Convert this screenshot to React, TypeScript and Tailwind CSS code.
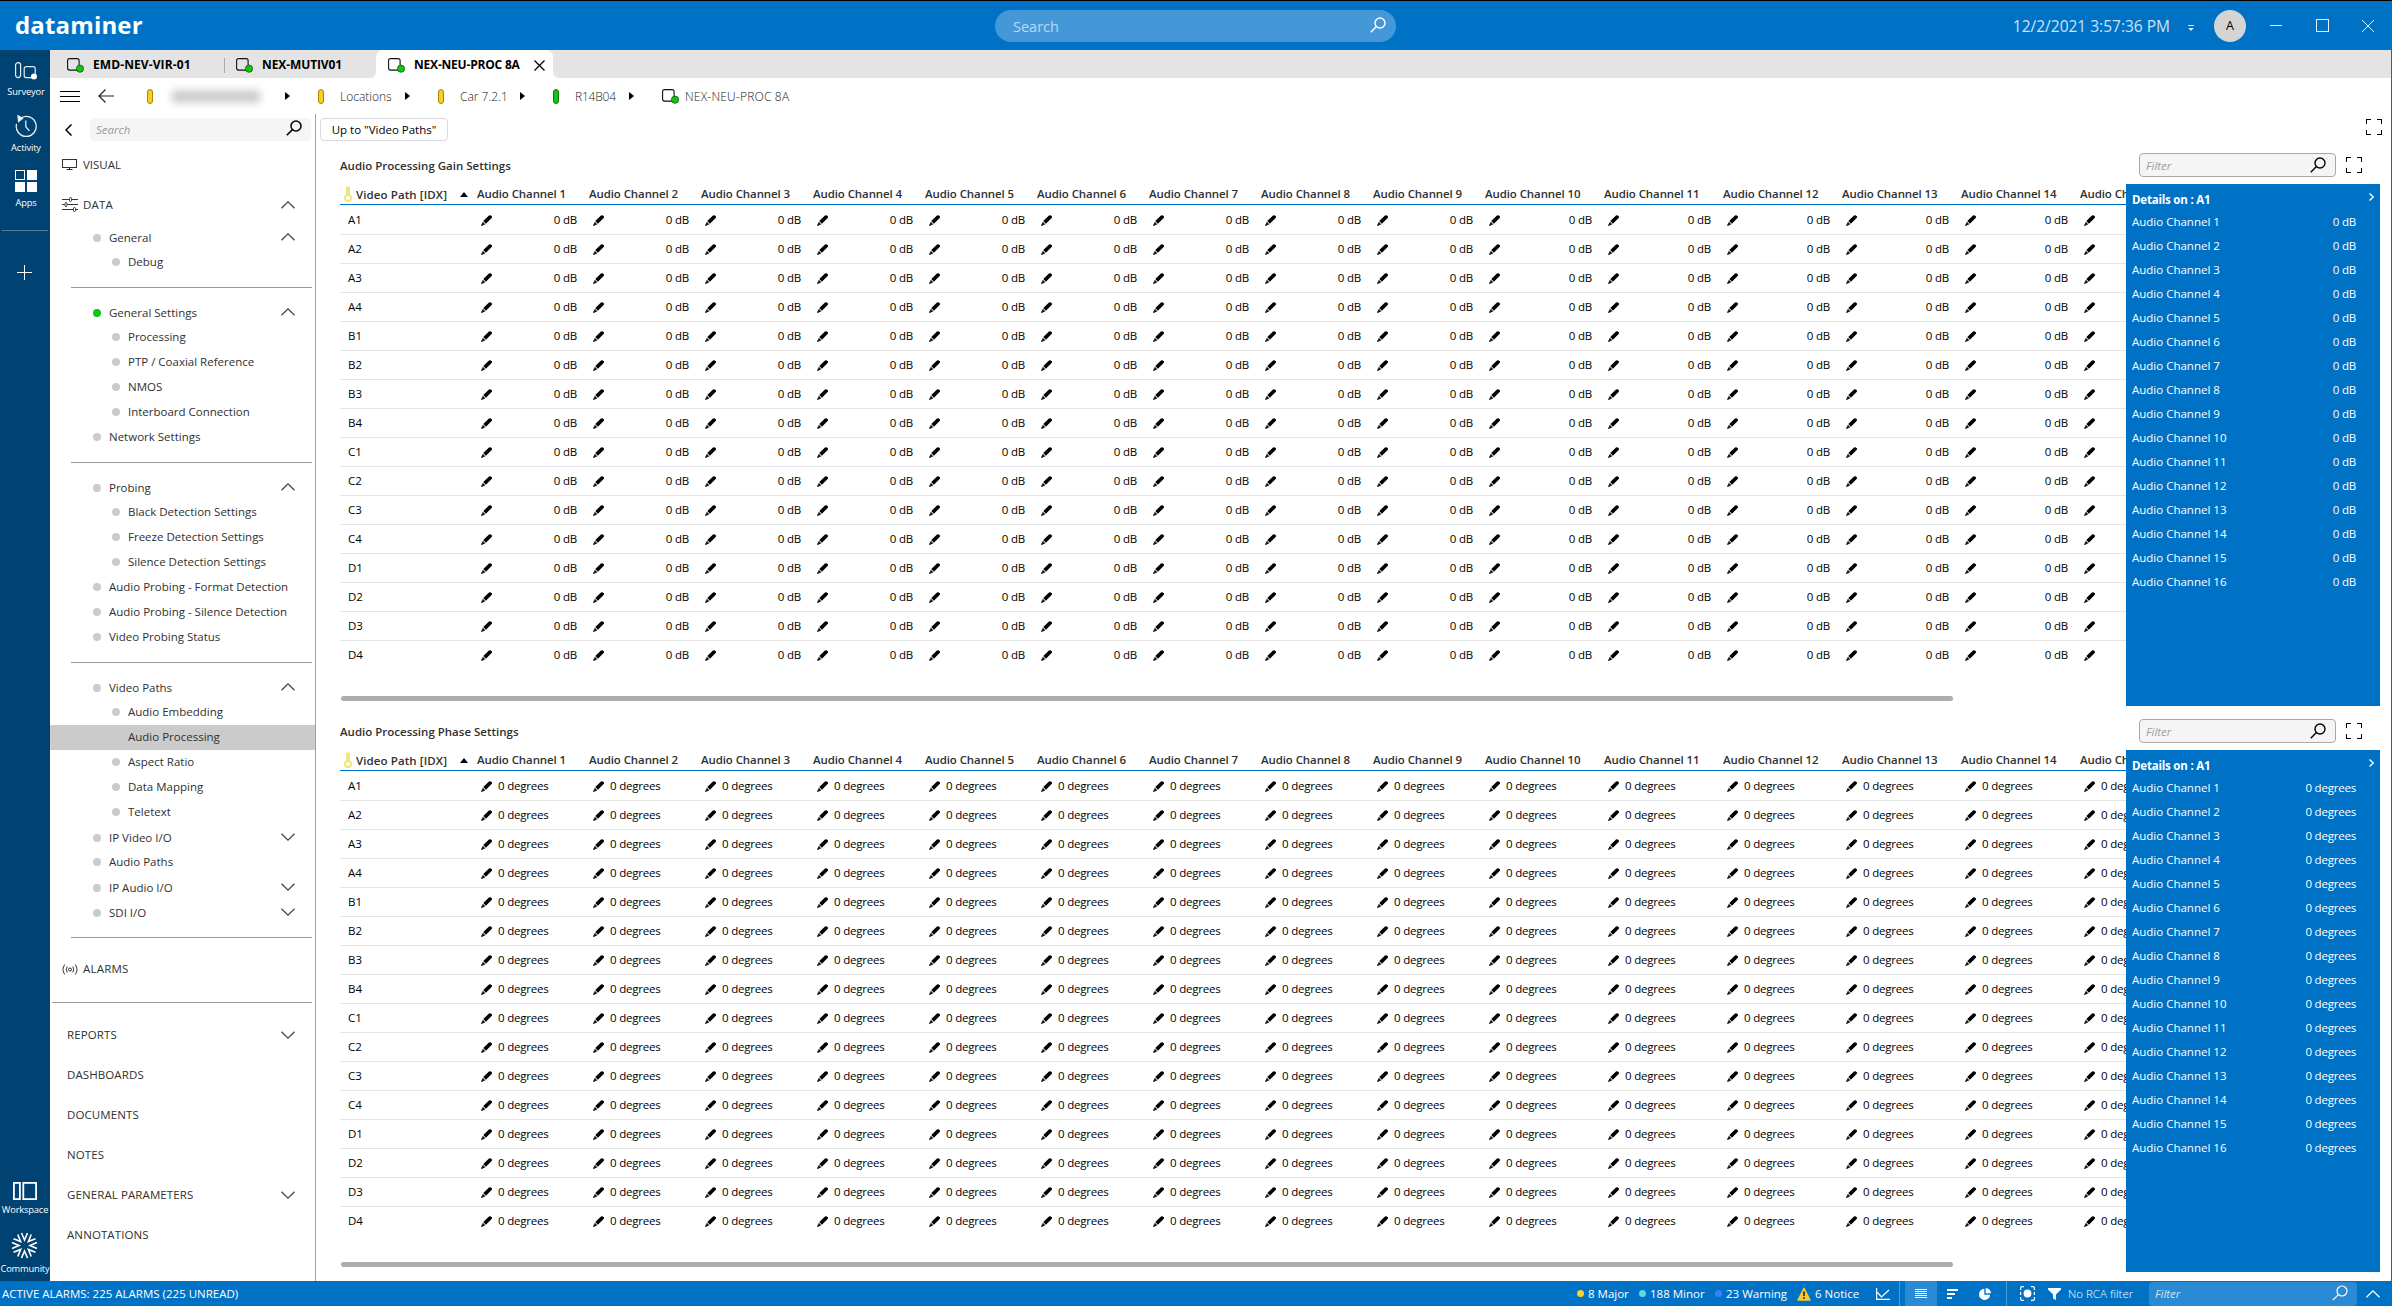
import React from 'react';

type NavItem = {
  label: string;
  level: 1 | 2;
  chevron?: 'up' | 'down';
  green?: boolean;
  selected?: boolean;
};

const navSections: NavItem[][] = [
  [
    { label: 'General', level: 1, chevron: 'up' },
    { label: 'Debug', level: 2 },
  ],
  [
    { label: 'General Settings', level: 1, chevron: 'up', green: true },
    { label: 'Processing', level: 2 },
    { label: 'PTP / Coaxial Reference', level: 2 },
    { label: 'NMOS', level: 2 },
    { label: 'Interboard Connection', level: 2 },
    { label: 'Network Settings', level: 1 },
  ],
  [
    { label: 'Probing', level: 1, chevron: 'up' },
    { label: 'Black Detection Settings', level: 2 },
    { label: 'Freeze Detection Settings', level: 2 },
    { label: 'Silence Detection Settings', level: 2 },
    { label: 'Audio Probing - Format Detection', level: 1 },
    { label: 'Audio Probing - Silence Detection', level: 1 },
    { label: 'Video Probing Status', level: 1 },
  ],
  [
    { label: 'Video Paths', level: 1, chevron: 'up' },
    { label: 'Audio Embedding', level: 2 },
    { label: 'Audio Processing', level: 2, selected: true },
    { label: 'Aspect Ratio', level: 2 },
    { label: 'Data Mapping', level: 2 },
    { label: 'Teletext', level: 2 },
    { label: 'IP Video I/O', level: 1, chevron: 'down' },
    { label: 'Audio Paths', level: 1 },
    { label: 'IP Audio I/O', level: 1, chevron: 'down' },
    { label: 'SDI I/O', level: 1, chevron: 'down' },
  ],
];

const pages: { label: string; chevron?: boolean }[] = [
  { label: 'REPORTS', chevron: true },
  { label: 'DASHBOARDS' },
  { label: 'DOCUMENTS' },
  { label: 'NOTES' },
  { label: 'GENERAL PARAMETERS', chevron: true },
  { label: 'ANNOTATIONS' },
];

const videoPaths = ['A', 'B', 'C', 'D'].flatMap((group) =>
  [1, 2, 3, 4].map((n) => `${group}${n}`)
);

const channels = Array.from({ length: 16 }, (_, i) => i + 1);
// the last channel is scrolled out of the table
const visibleChannels = channels.slice(0, 15);

const Magnifier: React.FC<{ className?: string; width?: number }> = ({
  className = '',
  width = 1.4,
}) => (
  <svg className={className} viewBox="0 0 16 16" fill="none" stroke="currentColor" strokeWidth={width}>
    <circle cx="10" cy="6" r="5" />
    <path d="M6.4 9.6L.8 15.2" />
  </svg>
);

const Chevron: React.FC<{ dir: 'up' | 'down'; className?: string }> = ({ dir, className = '' }) => (
  <svg
    className={`h-[8px] w-[14px] shrink-0 ${className}`}
    viewBox="0 0 14 8"
    fill="none"
    stroke="currentColor"
    strokeWidth="1.3"
  >
    <path d={dir === 'up' ? 'M.5 7.2L7 .9l6.500 6.300' : 'M.5 .8L7 7.100l6.500-6.300'} />
  </svg>
);

const Expand: React.FC = () => (
  <svg className="h-4 w-4 shrink-0" viewBox="0 0 16 16" fill="none" stroke="#000" shapeRendering="crispEdges">
    <path d="M.5 5V.5H5M11 .5h4.500V5M15.500 11v4.500H11M5 15.500H.5V11" />
  </svg>
);

const ElementIcon: React.FC = () => (
  <svg className="h-[15px] w-[17px] shrink-0" viewBox="0 0 17 15" fill="none">
    <rect x=".6" y=".6" width="11.500" height="11.500" rx="2" stroke="#111" strokeWidth="1.1" />
    <circle cx="13" cy="10.700" r="3.600" fill="#14c414" stroke="#0a5a0a" strokeWidth=".8" />
  </svg>
);

const Pencil: React.FC = () => (
  <svg className="h-[11px] w-[11px] shrink-0" viewBox="0 0 11 11">
    <path d="M2.300 6L8 .6Q9.300 -.1 10.500 .9T10.400 3.200L4.900 8.700z" fill="#000" />
    <path d="M1.900 6.700L4.300 9.200 .8 10.900Q-.2 10.800.2 9.900z" fill="#1a1a1a" />
  </svg>
);

const KeyIcon: React.FC = () => (
  <svg className="h-4 w-[8px] shrink-0" viewBox="0 0 8 16" fill="none">
    <path d="M2 1Q4 -.6 6 1V9.500H2z" fill="#efe67e" />
    <circle cx="4" cy="12" r="3" stroke="#efe67e" strokeWidth="2" />
  </svg>
);

const Caret: React.FC = () => (
  <svg className="h-[8px] w-[5px] shrink-0" viewBox="0 0 5 8">
    <path d="M0 0L5 4 0 8z" fill="#000" />
  </svg>
);

const TitleBar: React.FC = () => (
  <header className="flex h-[50px] shrink-0 items-center border-t border-black bg-[#0072c6] text-white">
    <div className="w-[995px] pb-[2px] pl-[15px] text-[24px] leading-none font-bold tracking-[0.15px]">
      dataminer
    </div>
    <div className="flex h-8 w-[401px] items-center justify-between rounded-full bg-[#4598d8] pr-[10px] pl-[18px]">
      <span className="pt-[2px] text-[14.500px] text-[#b9d9f1]">Search</span>
      <Magnifier className="mb-px h-4 w-4" />
    </div>
    <div className="ml-auto flex h-8 items-center pr-[18px]">
      <span className="mt-[3px] text-[15.500px] whitespace-nowrap text-[#cde2f4]">12/2/2021 3:57:36 PM</span>
      <svg className="mt-[4px] ml-[18px] h-[6px] w-[6px]" viewBox="0 0 6 6">
        <path d="M0 .5h6" stroke="#dcebf8" />
        <path d="M.2 3h5.600L3 6z" fill="#dcebf8" />
      </svg>
      <div className="ml-[20px] flex h-8 w-8 items-center justify-center rounded-full bg-[#d4d4d4] pt-px text-[12.500px] text-black">
        A
      </div>
      <div className="ml-6 h-px w-3 bg-[#e5f1fa]" />
      <div className="ml-[34px] h-[13px] w-[13px] border border-[#e5f1fa]" />
      <svg className="ml-[33px] h-[12px] w-[12px]" viewBox="0 0 12 12" stroke="#e5f1fa">
        <path d="M0 0l12 12M12 0L0 12" />
      </svg>
    </div>
  </header>
);

const RailLabel: React.FC<{ children: React.ReactNode }> = ({ children }) => (
  <span className="text-[9.300px] leading-[12px] tracking-[-0.15px] whitespace-nowrap">{children}</span>
);

const Rail: React.FC = () => (
  <aside className="flex w-[50px] shrink-0 flex-col items-center bg-[#004272] text-white">
    <div className="flex h-[55px] w-full flex-col items-center pt-3 pl-[2px]">
      <svg className="mb-[6px] h-[18px] w-[22px]" viewBox="0 0 22 18" fill="none" stroke="#e8eef4" strokeWidth="1.2">
        <rect x=".6" y=".6" width="5" height="15" rx="2.500" />
        <rect x="9.200" y="4.600" width="11" height="11" rx="2" />
        <circle cx="19" cy="14.500" r="3" fill="#fff" stroke="none" />
      </svg>
      <RailLabel>Surveyor</RailLabel>
    </div>
    <div className="flex h-[55px] w-full flex-col items-center pt-[10px] pl-[2px]">
      <svg className="mb-[5px] h-[22px] w-[22px]" viewBox="0 0 22 22" fill="none" stroke="#e8eef4" strokeWidth="1.300">
        <path d="M6.200 2.800A10 10 0 1 1 1.600 8.800" />
        <path d="M10.800 5.500v6.200l3.600 4.200" />
        <path d="M3 .8l4.600 2.600L3.600 6.600z" fill="#fff" />
      </svg>
      <RailLabel>Activity</RailLabel>
    </div>
    <div className="flex h-[75px] w-full flex-col items-center pt-[10px] pl-[2px]">
      <div className="mb-[5px] grid grid-cols-2 gap-[2px]">
        <div className="h-[10px] w-[10px] border border-white" />
        <div className="h-[10px] w-[10px] bg-white" />
        <div className="h-[10px] w-[10px] bg-white" />
        <div className="h-[10px] w-[10px] bg-white" />
      </div>
      <RailLabel>Apps</RailLabel>
    </div>
    <div className="mt-[-5px] h-px w-[46px] bg-[#5b7f9f]" />
    <svg className="mt-[34px] mr-px h-[15px] w-[15px]" viewBox="0 0 15 15" stroke="#fff">
      <path d="M7.500 0v15M0 7.500h15" />
    </svg>
    <div className="mt-auto flex flex-col items-center">
      <svg className="mb-[4px] h-[18px] w-[24px]" viewBox="0 0 24 18" fill="none" stroke="#fff" strokeWidth="1.800">
        <rect x=".9" y=".9" width="6" height="16.200" />
        <rect x="10.300" y=".9" width="12.800" height="16.200" />
      </svg>
      <RailLabel>Workspace</RailLabel>
      <svg className="mt-[16px] mb-[4px] h-[27px] w-[27px]" viewBox="-13.500 -13.500 27 27" fill="none" stroke="#fff" strokeWidth="1.600">
        {[0, 45, 90, 135, 180, 225, 270, 315].map((deg) => (
          <path key={deg} d="M-3 -12.500L0 -5.500 3 -12.500" transform={`rotate(${deg})`} />
        ))}
      </svg>
      <RailLabel>Community</RailLabel>
    </div>
    <div className="h-[6px] shrink-0" />
  </aside>
);

const TabBar: React.FC = () => (
  <div className="flex h-7 shrink-0 text-[12px] font-bold text-black">
    <div className="flex w-[326px] items-center rounded-br-[6px] bg-[#e4e4e4] pt-[2px] pl-[17px]">
      <ElementIcon />
      <span className="ml-[9px] w-[131px] tracking-[0.100px]">EMD-NEV-VIR-01</span>
      <span className="h-[15px] w-px bg-[#aaa]" />
      <span className="ml-[11px] flex">
        <ElementIcon />
      </span>
      <span className="ml-[9px] tracking-[-0.100px]">NEX-MUTIV01</span>
    </div>
    <div className="w-[177px] bg-linear-to-b from-[#e4e4e4] from-50% to-white to-50%">
      <div className="flex h-full items-center rounded-t-[7px] bg-white pt-[2px] pl-3">
        <ElementIcon />
        <span className="ml-[9px] w-[120px] tracking-[-0.200px]">NEX-NEU-PROC 8A</span>
        <svg className="h-[11px] w-[11px]" viewBox="0 0 11 11" stroke="#000" strokeWidth="1.300">
          <path d="M.5 .5l10 10M10.500 .5l-10 10" />
        </svg>
      </div>
    </div>
    <div className="flex-1 rounded-bl-[6px] bg-[#e4e4e4]" />
  </div>
);

const Breadcrumb: React.FC = () => (
  <div className="flex h-9 shrink-0 items-center pl-[10px] text-[12px] whitespace-nowrap text-[#222]">
    <div className="flex w-5 flex-col gap-1">
      <span className="h-px bg-black" />
      <span className="h-px bg-black" />
      <span className="h-px bg-black" />
    </div>
    <svg className="ml-[18px] h-[14px] w-4" viewBox="0 0 16 14" fill="none" stroke="#222" strokeWidth="1.200">
      <path d="M7.500 .5L1 7l6.500 6.500M1 7h15" />
    </svg>
    <span className="ml-[33px] h-[15px] w-[6px] rounded-[3px] border border-[#a8860c] bg-[#f5d020]" />
    <div className="ml-[14px] flex h-[15px] w-[98px] items-center justify-center pt-px blur-[4px]">
      <span className="h-[11px] w-[88px] bg-[#c4c4c4]" />
    </div>
    <span className="ml-5 flex w-[33px]">
      <Caret />
    </span>
    <span className="h-[15px] w-[6px] rounded-[3px] border border-[#a8860c] bg-[#f5d020]" />
    <span className="ml-4 w-[65px] pt-[2px] font-light">Locations</span>
    <span className="flex w-[33px]">
      <Caret />
    </span>
    <span className="h-[15px] w-[6px] rounded-[3px] border border-[#a8860c] bg-[#f5d020]" />
    <span className="ml-4 w-[60px] pt-[2px] font-light">Car 7.2.1</span>
    <span className="flex w-[33px]">
      <Caret />
    </span>
    <span className="h-[15px] w-[6px] rounded-[3px] border border-[#0b7a0b] bg-[#14c414]" />
    <span className="ml-4 w-[54px] pt-[2px] tracking-[-0.200px] font-light">R14B04</span>
    <span className="flex w-[33px]">
      <Caret />
    </span>
    <ElementIcon />
    <span className="ml-[6px] pt-[2px] font-light tracking-[0.200px]">NEX-NEU-PROC 8A</span>
  </div>
);

const NavRow: React.FC<{ item: NavItem }> = ({ item }) => (
  <div
    className={`flex h-[25px] items-center pr-5 ${item.level === 1 ? 'pl-[43px]' : 'pl-[62px]'} ${
      item.selected ? 'bg-[#cbcbcb]' : ''
    } ${item.chevron ? 'pt-px' : 'pb-px'}`}
  >
    <span className={`h-2 w-2 rounded-full ${item.green ? 'bg-[#14c414]' : 'bg-[#cbcbcb]'}`} />
    <span className="ml-2 flex-1">{item.label}</span>
    {item.chevron && <Chevron dir={item.chevron} className="mb-[2px] text-[#444]" />}
  </div>
);

const Separator: React.FC<{ wide?: boolean }> = ({ wide }) => (
  <div className={`h-[25px] pt-3 pr-[3px] ${wide ? 'pl-[2px]' : 'pl-[21px]'}`}>
    <div className="h-px bg-[#999]" />
  </div>
);

const NavPanel: React.FC = () => (
  <nav className="w-[266px] shrink-0 border-r border-[#a0a0a0] text-[11.500px] whitespace-nowrap text-[#303030]">
    <div className="flex h-[31px] items-center pr-1 pl-[15px]">
      <svg className="h-3 w-[7px]" viewBox="0 0 7 12" fill="none" stroke="#000" strokeWidth="1.500">
        <path d="M6.500 .5L1 6l5.500 5.500" />
      </svg>
      <div className="ml-[18px] flex h-[23px] flex-1 items-center justify-between rounded-[4px] bg-[#f5f5f5] pr-[9px] pl-[6px]">
        <span className="text-[#999] italic">Search</span>
        <Magnifier className="mb-[3px] h-4 w-4 text-black" width={1.5} />
      </div>
    </div>
    <div className="flex h-10 items-center pb-px pl-3">
      <svg className="h-[11px] w-[15px]" viewBox="0 0 15 11" fill="none" stroke="#333">
        <rect x=".5" y=".5" width="14" height="8" />
        <path d="M7.500 8.500v2M4.500 10.500h6" />
      </svg>
      <span className="ml-[6px]">VISUAL</span>
    </div>
    <div className="flex h-10 items-center pr-5 pl-3">
      <svg className="mb-[2px] h-[15px] w-4" viewBox="0 0 16 15" fill="none" stroke="#333">
        <path d="M0 2.500h7M10 2.500h6M0 7.500h2.500M5.500 7.500H16M0 12.500h11M14 12.500h2" />
        <rect x="7.500" y=".5" width="2" height="4" rx="1" />
        <rect x="3" y="5.500" width="2" height="4" rx="1" />
        <rect x="11.500" y="10.500" width="2" height="4" rx="1" />
      </svg>
      <span className="ml-[5px] flex-1 tracking-[0.200px]">DATA</span>
      <Chevron dir="up" className="text-[#444]" />
    </div>
    {navSections.map((section) => (
      <React.Fragment key={section[0].label}>
        {section.map((item) => (
          <NavRow key={item.label} item={item} />
        ))}
        <Separator />
      </React.Fragment>
    ))}
    <div className="flex h-10 items-center pb-[2px] pl-3">
      <svg className="h-[11px] w-4" viewBox="0 0 16 11" fill="none" stroke="#333">
        <circle cx="8" cy="5.500" r="1.500" />
        <path d="M5.200 2.500Q3.400 5.500 5.200 8.500M10.800 2.500Q12.600 5.500 10.800 8.500M2.800 .5Q-.9 5.500 2.800 10.500M13.200 .5Q16.900 5.500 13.200 10.500" />
      </svg>
      <span className="ml-[5px] tracking-[0.200px]">ALARMS</span>
    </div>
    <Separator wide />
    {pages.map((page) => (
      <div key={page.label} className="flex h-10 items-center justify-between pr-5 pb-px pl-[17px]">
        <span className="tracking-[0.100px]">{page.label}</span>
        {page.chevron && <Chevron dir="down" className="text-[#444]" />}
      </div>
    ))}
  </nav>
);

type TableProps = { title: string; value: string; align: 'left' | 'right' };

const ParameterTable: React.FC<TableProps> = ({ title, value, align }) => (
  <section className="flex h-[566px] flex-col text-[11.500px] whitespace-nowrap text-black">
    <div className="flex h-[39px] items-center pt-px pr-[29px]">
      <h2 className="flex-1 pt-px font-semibold text-[#303030]">{title}</h2>
      <div className="mr-[10px] flex h-6 w-[197px] items-center justify-between rounded-[4px] border border-[#a8a8a8] bg-[#f5f5f5] pr-[9px] pl-[6px]">
        <span className="pt-px text-[#a0a0a0] italic">Filter</span>
        <Magnifier className="mb-px h-4 w-4" />
      </div>
      <Expand />
    </div>
    <div className="flex flex-1">
      <div className="flex w-[1786px] flex-col overflow-hidden">
        <div className="flex h-[21px] w-max items-center border-b border-[#0072c6] font-semibold text-[#303030]">
          <div className="flex w-[137px] items-center pl-1">
            <KeyIcon />
            <span className="ml-1 flex-1 pt-px tracking-[0.100px]">Video Path [IDX]</span>
            <svg className="mr-[9px] h-[5px] w-[8px]" viewBox="0 0 8 5">
              <path d="M4 0l4 5H0z" fill="#000" />
            </svg>
          </div>
          {visibleChannels.map((n) => (
            <div key={n} className={`tracking-[-0.100px] ${n < 10 ? 'w-[112px]' : 'w-[119px]'}`}>
              Audio Channel {n}
            </div>
          ))}
        </div>
        <div className="mt-px w-max">
          {videoPaths.map((path) => (
            <div key={path} className="flex h-[29px] items-center border-b border-[#e4e4e4] last:border-transparent">
              <div className="w-[137px] pl-2">{path}</div>
              {visibleChannels.map((n) => (
                <div
                  key={n}
                  className={`flex items-center pr-[12px] pl-1 tracking-[-0.200px] ${
                    n < 10 ? 'w-[112px]' : 'w-[119px]'
                  } ${align === 'right' ? 'justify-between' : 'gap-[6px]'}`}
                >
                  <Pencil />
                  <span>{value}</span>
                </div>
              ))}
            </div>
          ))}
        </div>
        <div className="mt-[26px] ml-px h-[5px] w-[1612px] rounded-full bg-[#adadad]" />
      </div>
      <div className="h-[522px] w-[254px] bg-[#0072c6] pr-[24px] pl-[6px] text-white">
        <div className="flex h-[26px] items-center justify-between pt-[6px] font-bold">
          <span className="tracking-[-0.2px]">Details on : A1</span>
          <svg className="mr-[-18px] mb-[6px] h-[8px] w-[5px]" viewBox="0 0 5 8" fill="none" stroke="#fff" strokeWidth="1.300">
            <path d="M.5 .5L4.200 4 .5 7.500" />
          </svg>
        </div>
        {channels.map((n) => (
          <div key={n} className="flex h-6 items-center justify-between pb-px">
            <span>Audio Channel {n}</span>
            <span className="tracking-[-0.200px]">{value}</span>
          </div>
        ))}
      </div>
    </div>
  </section>
);

const StatusBar: React.FC = () => (
  <footer className="flex h-[25px] shrink-0 items-center bg-[#0072c6] text-[11.500px] whitespace-nowrap text-white">
    <span className="w-[1577px] pl-[2px]">ACTIVE ALARMS: 225 ALARMS (225 UNREAD)</span>
    <span className="h-[7px] w-[7px] rounded-full bg-[#f8d22a]" />
    <span className="ml-1 w-[51px]">8 Major</span>
    <span className="h-[7px] w-[7px] rounded-full bg-[#5fd9dc]" />
    <span className="ml-1 w-[65px]">188 Minor</span>
    <span className="h-[7px] w-[7px] rounded-full bg-[#3f7cf8]" />
    <span className="ml-1 w-[71px]">23 Warning</span>
    <svg className="h-[14px] w-[14px]" viewBox="0 0 14 14">
      <path d="M7 .8L13.300 13.200H.7z" fill="#fbc92d" stroke="#fbc92d" strokeLinejoin="round" />
      <path d="M7 4.500v4.500M7 10.300v1.700" stroke="#222" strokeWidth="1.600" />
    </svg>
    <span className="ml-1 w-[61px]">6 Notice</span>
    <svg className="h-3 w-[14px]" viewBox="0 0 14 12" fill="none" stroke="#fff" strokeWidth="1.200">
      <path d="M.6 0v11.400H14M1.500 4.500L5.500 9 13 2" />
    </svg>
    <span className="ml-[9px] h-full w-px bg-[#4c9cd8]" />
    <span className="ml-[5px] flex h-full w-8 flex-col items-center justify-center gap-px bg-[#2b8ad4]">
      <span className="h-px w-3 bg-white" />
      <span className="h-px w-3 bg-white" />
      <span className="h-px w-3 bg-white" />
      <span className="h-px w-3 bg-white" />
      <span className="h-px w-3 bg-white" />
    </span>
    <span className="ml-[10px] flex w-3 flex-col gap-[2px]">
      <span className="h-[2px] w-[11px] bg-white" />
      <span className="h-[2px] w-[8px] bg-white" />
      <span className="h-[2px] w-[5px] bg-white" />
    </span>
    <svg className="ml-5 h-3 w-3" viewBox="0 0 12 12" fill="#fff">
      <path d="M5.300 .8V6.700H11.200A5.600 5.600 0 1 1 5.300 .8z" />
      <path d="M6.700 0A5.300 5.300 0 0 1 12 5.300H6.700z" />
    </svg>
    <span className="ml-[15px] h-full w-px bg-[#4c9cd8]" />
    <svg className="ml-[13px] h-[15px] w-[15px]" viewBox="0 0 15 15" fill="none" stroke="#fff" strokeWidth="1.200">
      <path d="M4 .6H2Q.6 .6 .6 2v2M11 .6h2q1.400 0 1.400 1.400v2M4 14.400H2Q.6 14.400 .6 13v-2M11 14.400h2q1.400 0 1.400-1.400v-2M.6 6v3M14.400 6v3" />
      <circle cx="7.500" cy="7.500" r="3.300" fill="#fff" />
    </svg>
    <svg className="ml-[13px] h-3 w-[13px]" viewBox="0 0 13 12">
      <path d="M0 0h13v1.500L8 6.500V12L5 10.500v-4L0 1.500z" fill="#fff" />
    </svg>
    <span className="ml-[7px] w-[81px] font-light">No RCA filter</span>
    <div className="flex h-6 w-[208px] items-center justify-between rounded-[4px] bg-[#2b8ad4] pr-[9px] pl-[6px]">
      <span className="text-[#cfe5f6] italic">Filter</span>
      <Magnifier className="mb-px h-4 w-4" width={1.2} />
    </div>
    <Chevron dir="up" className="ml-[9px]" />
  </footer>
);

const App: React.FC = () => {
  return (
    <div className="flex h-[1306px] w-[2392px] flex-col overflow-hidden bg-white font-['Open_Sans','Noto_Sans',sans-serif]">
      <TitleBar />
      <div className="flex min-h-0 flex-1">
        <Rail />
        <div className="flex min-w-0 flex-1 flex-col border-r border-[#0072c6]">
          <TabBar />
          <Breadcrumb />
          <div className="flex min-h-0 flex-1">
            <NavPanel />
            <main className="min-w-0 flex-1 pl-1">
              <div className="flex h-[31px] items-center justify-between pr-[9px]">
                <button className="h-[23px] w-32 rounded-[4px] border border-[#dadada] text-[11.500px] whitespace-nowrap">
                  Up to "Video Paths"
                </button>
                <div className="mb-[5px] flex">
                  <Expand />
                </div>
              </div>
              <div className="pl-5">
                <ParameterTable title="Audio Processing Gain Settings" value="0 dB" align="right" />
                <ParameterTable title="Audio Processing Phase Settings" value="0 degrees" align="left" />
              </div>
            </main>
          </div>
        </div>
      </div>
      <StatusBar />
    </div>
  );
};

export default App;
